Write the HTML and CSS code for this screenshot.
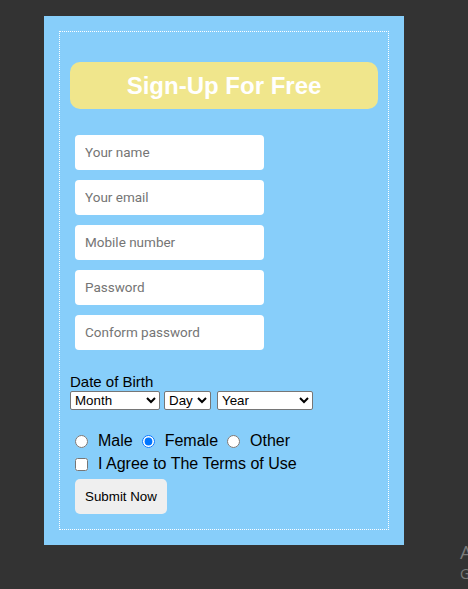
FILE: index.html
```html
<!DOCTYPE html>
<html>
<head>
<meta charset="utf-8">
<link rel="stylesheet" href="styles.css">
</head>
<body>
<div class="panel">
  <form class="form">
    <h1 class="title">Sign-Up For Free</h1>
    <div class="fields">
      <input class="field" type="text" placeholder="Your name">
      <input class="field" type="text" placeholder="Your email">
      <input class="field" type="text" placeholder="Mobile number">
      <input class="field" type="password" placeholder="Password">
      <input class="field" type="password" placeholder="Conform password">
    </div>
    <div class="dob">
      <div class="dob-label">Date of Birth</div>
      <div class="dob-selects">
        <select class="sel sel-month"><option>Month</option></select>
        <select class="sel sel-day"><option>Day</option></select>
        <select class="sel sel-year"><option>Year</option></select>
      </div>
    </div>
    <div class="gender">
      <label class="opt"><input type="radio" name="g"> Male</label>
      <label class="opt"><input type="radio" name="g" checked> Female</label>
      <label class="opt"><input type="radio" name="g"> Other</label>
    </div>
    <label class="agree"><input type="checkbox"> I Agree to The Terms of Use</label>
    <button class="submit" type="button">Submit Now</button>
  </form>
</div>
<div class="watermark">
  <div class="wm1">Activate Windows</div>
  <div class="wm2">Go to Settings to activate Windows.</div>
</div>
</body>
</html>
```
FILE: styles.css
```css
html, body {
  margin: 0;
  padding: 0;
  background: #333333;
  height: 100%;
  overflow: hidden;
}
body {
  padding: 16px 0 0 44px;
  font-family: "Liberation Sans", Arial, sans-serif;
  box-sizing: border-box;
}
.panel {
  width: 360px;
  height: 529px;
  box-sizing: border-box;
  background: #87cefa;
  padding: 15px;
}
.form {
  border: 1px dotted #ffffff;
  height: 499px;
  box-sizing: border-box;
  padding: 30px 10px 0 10px;
}
.title {
  margin: 0;
  height: 47px;
  background: #f0e68c;
  border-radius: 10px;
  color: #ffffff;
  font-size: 24px;
  font-weight: bold;
  text-align: center;
  line-height: 47px;
}
.fields {
  display: flex;
  flex-direction: column;
  gap: 10px;
  padding: 26px 0 0 5px;
}
.field {
  width: 189px;
  height: 35px;
  box-sizing: border-box;
  border: none;
  border-radius: 4px;
  padding: 0 10px 2px 10px;
  font-family: Roboto, "Liberation Sans", Arial, sans-serif;
  font-size: 13.5px;
  background: #ffffff;
  outline: none;
}
.field::placeholder {
  color: #757575;
}
.dob {
  margin-top: 23px;
}
.dob-label {
  font-size: 15px;
  line-height: 17px;
  color: #000;
  margin-bottom: 1px;
}
.dob-selects {
  display: flex;
  gap: 4px;
}
.sel {
  height: 19px;
  font-family: "Liberation Sans", Arial, sans-serif;
  font-size: 13.33px;
  border: 1px solid #767676;
  border-radius: 2px;
  background: #fff;
  padding: 0;
}
.sel-month { width: 90px; }
.sel-day { width: 47px; }
.sel-year { width: 96px; margin-left: 2px; }
.gender {
  display: flex;
  margin-top: 22px;
  padding-left: 5px;
  font-size: 16px;
  line-height: 18px;
}
.opt {
  display: flex;
  align-items: center;
  margin-right: 9px;
}
.opt input {
  margin: 0 10px 0 0;
  width: 13px;
  height: 13px;
}
.agree {
  display: flex;
  align-items: center;
  margin-top: 5px;
  padding-left: 5px;
  font-size: 16px;
  line-height: 18px;
}
.agree input {
  margin: 0 10px 0 0;
  width: 13px;
  height: 13px;
}
.submit {
  margin: 6px 0 0 5px;
  width: 92px;
  height: 35px;
  border: none;
  border-radius: 5px;
  background: #efefef;
  font-family: "Liberation Sans", Arial, sans-serif;
  font-size: 13.33px;
  color: #000;
  padding: 0;
}
.watermark {
  position: absolute;
  left: 460px;
  top: 540px;
  color: #7a7a7a;
  font-family: "Open Sans", sans-serif;
  white-space: nowrap;
}
.wm1 {
  font-size: 19px;
  line-height: 24px;
}
.wm2 {
  font-size: 14px;
  line-height: 20px;
}
```
